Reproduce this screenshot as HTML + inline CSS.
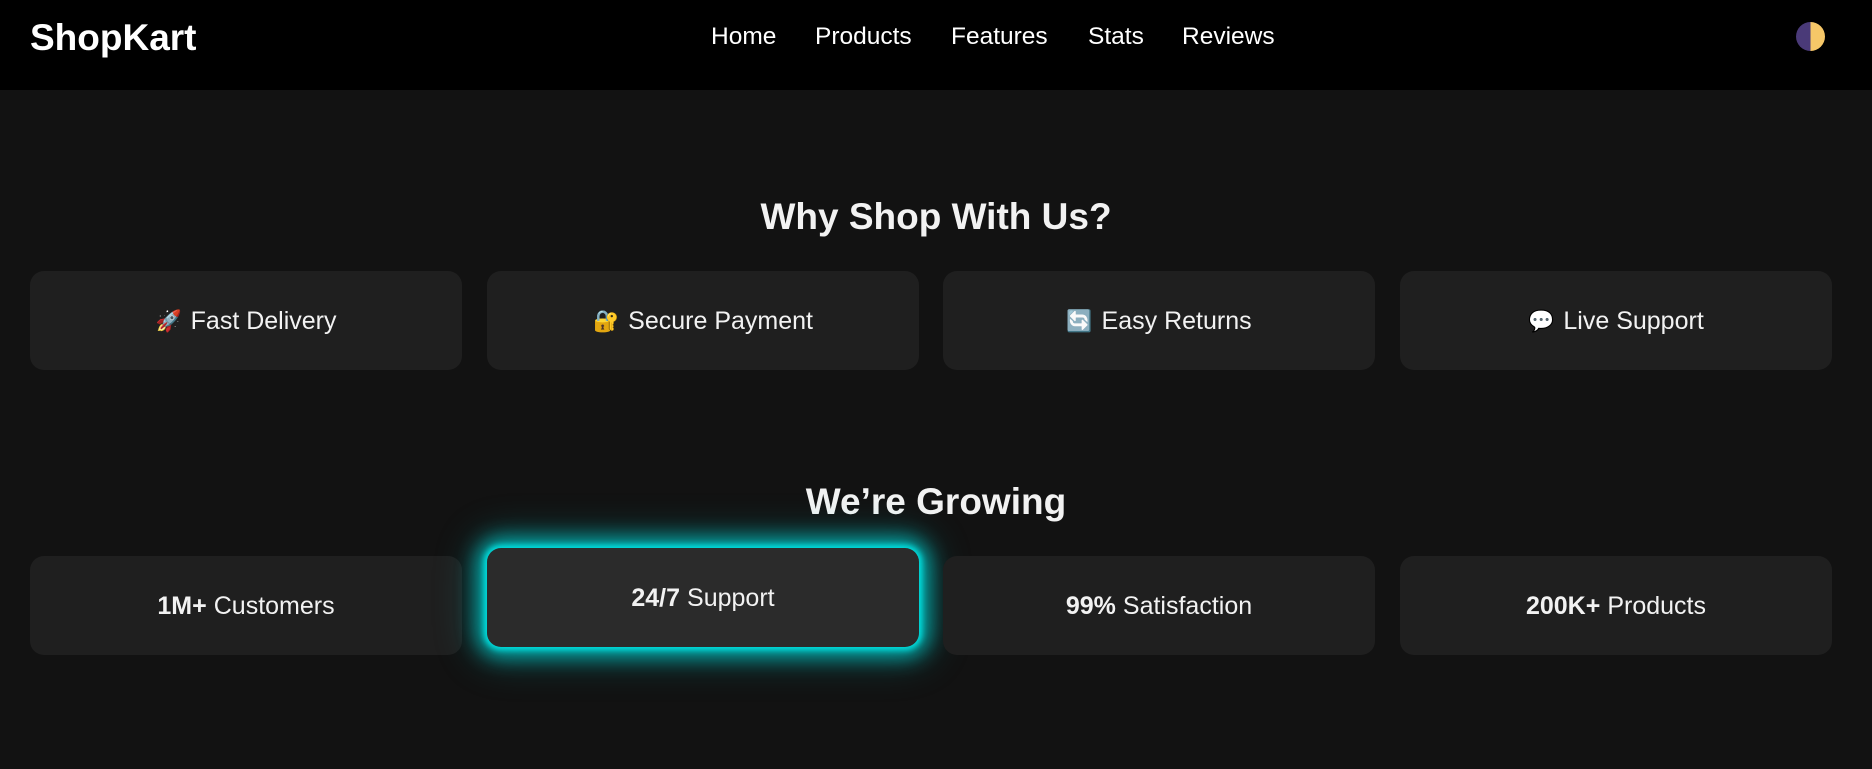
<!DOCTYPE html>
<html><head><meta charset="utf-8"><style>
*{margin:0;padding:0;box-sizing:border-box}
html,body{width:1872px;height:769px;overflow:hidden;background:#121212;font-family:"Liberation Sans",sans-serif;color:#f0f0f0}
header{position:absolute;left:0;top:0;width:1872px;height:90px;background:#000}
.logo{position:absolute;left:30px;top:17px;font-size:37px;font-weight:bold;color:#fff}
.nav a{position:absolute;top:23px;font-size:24.5px;color:#fff;text-decoration:none}
.toggle{position:absolute;left:1796px;top:22px;width:29px;height:29px;border-radius:50%;background:linear-gradient(90deg,#4a3a78 50%,#f6c768 50%)}
h2{position:absolute;left:0;width:1872px;text-align:center;font-size:37px;font-weight:bold;color:#f2f2f2}
.card{position:absolute;width:432px;height:99px;border-radius:14px;background:#1f1f1f;display:flex;align-items:center;justify-content:center;font-size:25px;color:#f2f2f2;padding-top:2px}
.card b{margin-right:7px}
.em{margin-right:9px;font-size:21px}
.hl{background:#2b2b2b;box-shadow:0 0 6px 3px #00dede,0 0 20px 10px rgba(0,215,215,.75),0 0 40px 14px rgba(0,200,200,.25)}
</style></head><body>
<header>
<div class="logo">ShopKart</div>
<div class="nav">
<a style="left:711px">Home</a>
<a style="left:815px">Products</a>
<a style="left:951px">Features</a>
<a style="left:1088px">Stats</a>
<a style="left:1182px">Reviews</a>
</div>
<div class="toggle"></div>
</header>
<h2 style="top:196px">Why Shop With Us?</h2>
<div class="card" style="left:30px;top:271px"><span class="em">🚀</span>Fast Delivery</div>
<div class="card" style="left:487px;top:271px"><span class="em">🔐</span>Secure Payment</div>
<div class="card" style="left:943px;top:271px"><span class="em">🔄</span>Easy Returns</div>
<div class="card" style="left:1400px;top:271px"><span class="em">💬</span>Live Support</div>
<h2 style="top:481px">We’re Growing</h2>
<div class="card" style="left:30px;top:556px"><b>1M+</b>Customers</div>
<div class="card hl" style="left:487px;top:548px"><b>24/7</b>Support</div>
<div class="card" style="left:943px;top:556px"><b>99%</b>Satisfaction</div>
<div class="card" style="left:1400px;top:556px"><b>200K+</b>Products</div>
</body></html>
